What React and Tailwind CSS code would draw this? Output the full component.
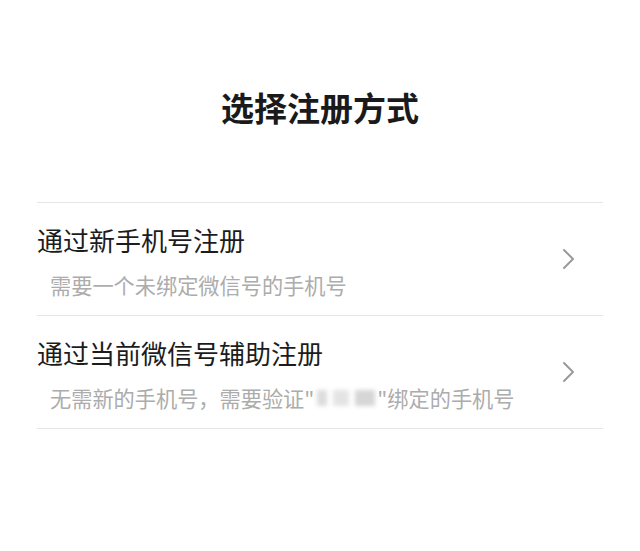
import React from "react";

function Chevron() {
  return (
    <svg width="14" height="22" viewBox="0 0 14 22" fill="none" className="shrink-0">
      <polyline points="2,2 11,11 2,20" stroke="#9a9a9a" strokeWidth="2" strokeLinecap="round" strokeLinejoin="round" />
    </svg>
  );
}

function Row({ title, children }) {
  return (
    <div className="flex items-center border-b border-[#e6e6e6] h-[113px]">
      <div className="flex-1 pt-[24px] pb-[20px] self-stretch flex flex-col">
        <div className="text-[26px] leading-[26px] text-[#1c1c1c]">{title}</div>
        <div className="mt-[21px] pl-[13px] text-[21.2px] leading-[22px] text-[#acacac] flex items-center whitespace-nowrap">
          {children}
        </div>
      </div>
      <div className="pr-[27px]">
        <Chevron />
      </div>
    </div>
  );
}

export default function App() {
  return (
    <div
      className="w-[640px] h-[551px] bg-white overflow-hidden"
      style={{ fontFamily: '"Noto Sans CJK SC", "Noto Sans", sans-serif' }}
    >
      <div className="pt-[89px] h-[202px]">
        <div className="text-center text-[33px] leading-[36px] font-bold text-[#1a1a1a]">选择注册方式</div>
      </div>
      <div className="mx-[37px] border-t border-[#e6e6e6]">
        <Row title="通过新手机号注册">需要一个未绑定微信号的手机号</Row>
        <Row title="通过当前微信号辅助注册">
          <span>无需新的手机号，需要验证"</span>
          <span className="inline-flex items-center gap-[6px] ml-[3px] mr-[2px]">
            <span className="w-[10px] h-[16px] bg-[#dcdcdc] blur-[2px]" />
            <span className="w-[16px] h-[16px] bg-[#e4e4e4] blur-[2px]" />
            <span className="w-[20px] h-[16px] bg-[#d6d6d6] blur-[2px]" />
          </span>
          <span>"绑定的手机号</span>
        </Row>
      </div>
    </div>
  );
}
